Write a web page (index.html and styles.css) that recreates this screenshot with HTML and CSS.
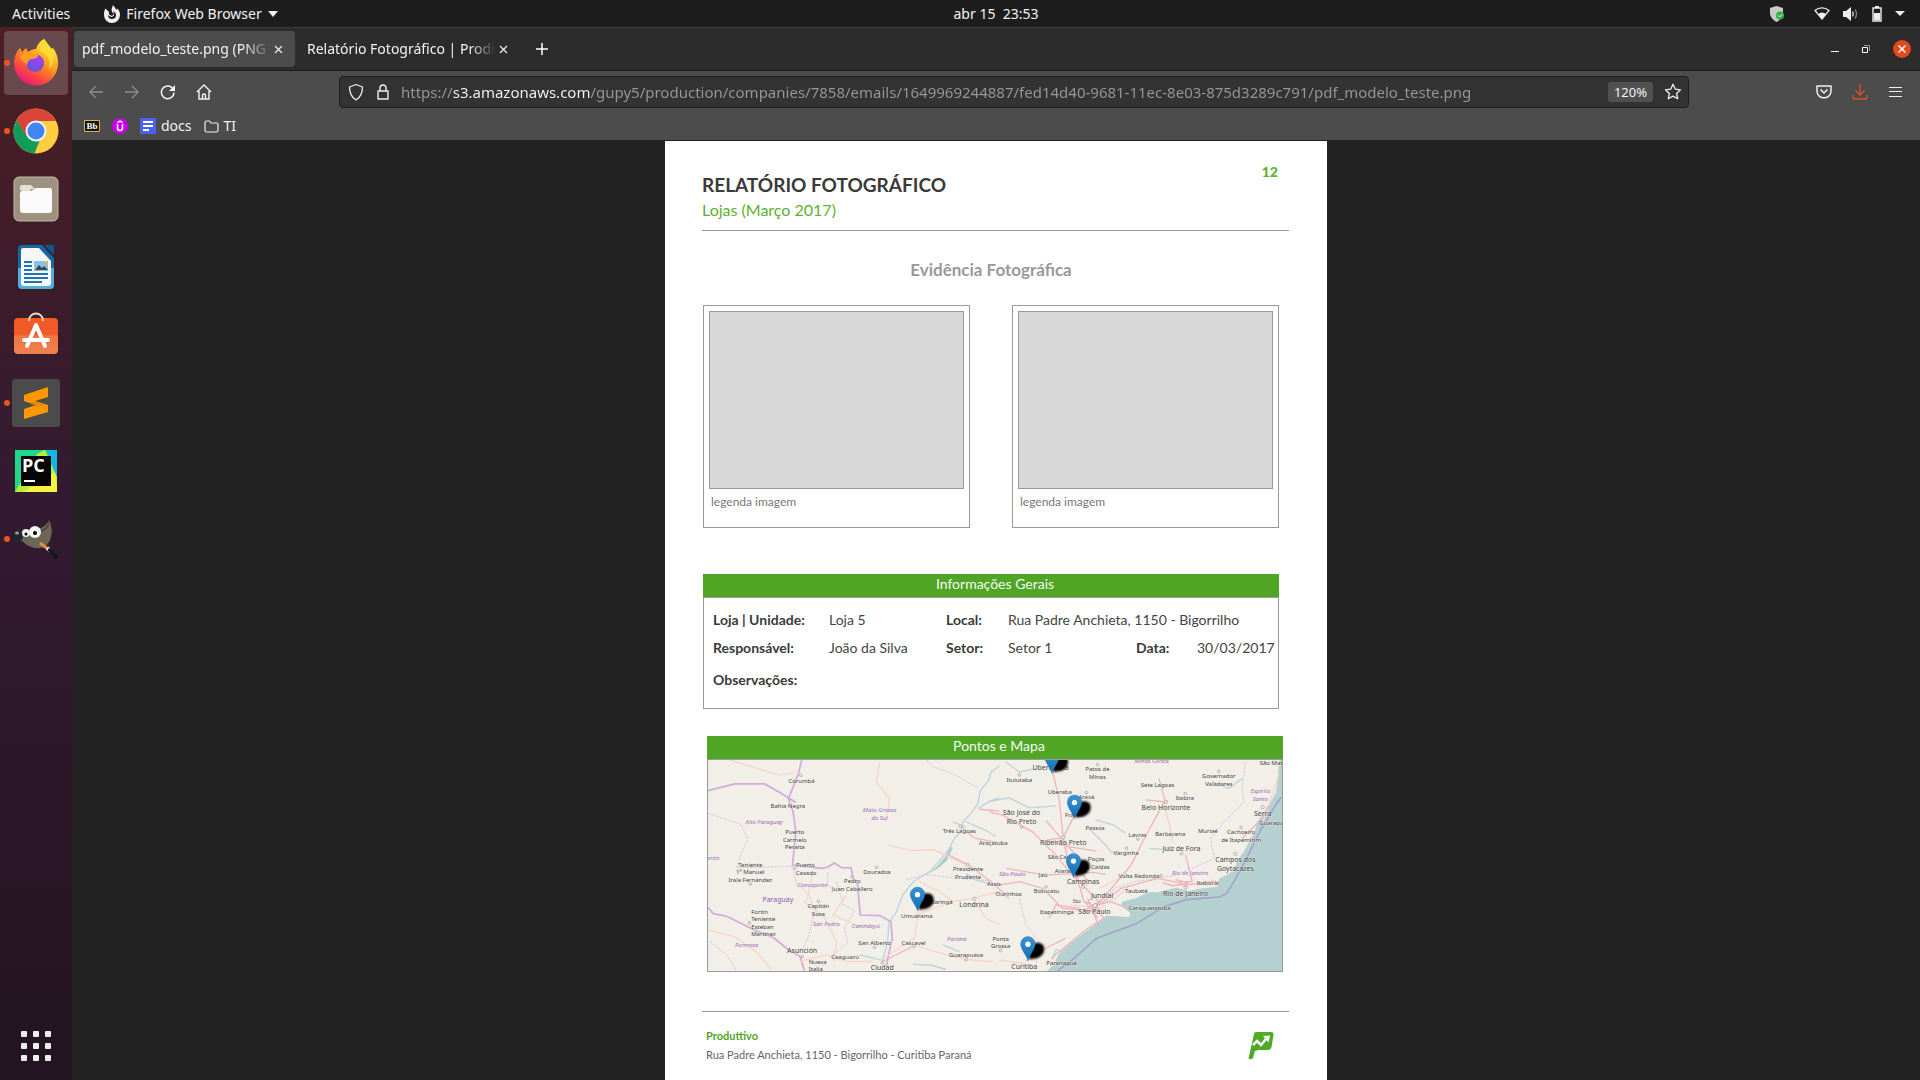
FILE: index.html
```html
<!DOCTYPE html>
<html lang="pt-BR">
<head>
<meta charset="utf-8">
<meta name="viewport" content="width=device-width, initial-scale=1">
<title>pdf_modelo_teste.png</title>
<link rel="stylesheet" href="styles.css">
</head>
<body>
<header class="topbar">
  <div class="topbar-left">
    <button class="plain">Activities</button>
    <button class="plain app-menu">
      <svg width="16" height="18" viewBox="0 0 16 18"><path fill="#f2f2f2" d="M9 0 7.500 4.500 8 7l2 2-2 2-3-1.500L5 7 1.500 3.500C0 6 0 8 0 10a8 8 0 0 0 16 0c0-3-1-5-3-6.500l-1 2C12 3 10 2 9 0z"/><path fill="#1d1d1d" d="M9 6c2 .8 3 2.500 3 4.500S10.500 14 8 14s-4-1.500-4-4l2 1.500 2 .5 2-1.500V8z"/></svg>
      Firefox Web Browser
      <svg width="10" height="6" viewBox="0 0 10 6"><path fill="#f2f2f2" d="M0 0h10L5 6z"/></svg>
    </button>
  </div>
  <time class="clock">abr 15&nbsp; 23:53</time>
  <div class="status">
    <svg class="status-shield" width="15" height="16" viewBox="0 0 15 16"><path fill="#c9c9c9" d="M6.500 0 13 2v5c0 4-3 7-6.500 9C3 14 0 11 0 7V2z"/><circle cx="10" cy="9.500" r="4" fill="#2eb34a"/><path d="m8 9.500 1.500 1.500L12 8.500" fill="none" stroke="#fff"/></svg>
    <svg width="16" height="13" viewBox="0 0 16 13"><path fill="none" stroke="#eee" stroke-width="1.200" d="M1 3.500C5 0 11 0 15 3.500L8 12z"/><path fill="#eee" d="M4 7c2.500-2 5.500-2 8 0l-4 5.500z"/></svg>
    <svg width="16" height="14" viewBox="0 0 16 14"><path fill="#eee" d="M0 4h3l5-4v14l-5-4H0z"/><path fill="none" stroke="#eee" stroke-width="1.300" d="M9.500 4.500q1.500 2.500 0 5"/><path fill="none" stroke="#888" stroke-width="1.300" d="M12 2.500q3 4.500 0 9"/></svg>
    <svg width="10" height="16" viewBox="0 0 10 16"><path fill="none" stroke="#eee" stroke-width="1.400" d="M1 2h8v13H1z"/><path fill="#eee" d="M3 0h4v2H3zM2 7h6v7H2z"/></svg>
    <svg width="10" height="5" viewBox="0 0 10 5"><path fill="#eee" d="M0 0h10L5 5z"/></svg>
  </div>
</header>
<div class="desktop">
  <nav class="dock" aria-label="Dock">
    <button class="dock-item is-running is-active" aria-label="Firefox">
      <svg width="46" height="48" viewBox="0 1 46 48">
        <defs>
          <linearGradient id="fx" x1="0.800" y1="0.100" x2="0.250" y2="1"><stop offset="0" stop-color="#ffe93a"/><stop offset=".4" stop-color="#ff9a20"/><stop offset=".7" stop-color="#ff4a3d"/><stop offset="1" stop-color="#e3128b"/></linearGradient>
          <radialGradient id="globe" cx=".6" cy=".2" r=".9"><stop offset="0" stop-color="#a63ff5"/><stop offset="1" stop-color="#5a58d6"/></radialGradient>
        </defs>
        <path fill="url(#fx)" d="M31 1c3 4 5 7 6 10l3-1c4 5 5 10 5 15a22 22 0 0 1-44 1C1 20 3 14 7 10l2 4 4-4 2 4c3-2 5-3 8-3 1-4 4-8 8-10z"/>
        <path fill="#ffdd35" d="M31 1c-4 3-6 8-4 12 7 3 12 8 9 18 6-5 5-14 2-21-2-3-5-6-7-9z"/>
        <circle cx="22" cy="25" r="9" fill="url(#globe)"/>
        <path fill="#ff9c24" d="M7 19c3-5 8-6 12-5l6 3c1 2-3 4-7 4-2 1-4 3-4 6-3-3-6-5-7-8z"/>
      </svg>
    </button>
    <button class="dock-item is-running" aria-label="Google Chrome">
      <svg width="46" height="46" viewBox="0 0 46 46"><circle cx="23" cy="23" r="22.500" fill="#ffcd40"/><path fill="#db4437" d="M23 .5A22.500 22.500 0 0 1 43 13H23L13 29 3.500 12A22.500 22.500 0 0 1 23 .5z"/><path fill="#0f9d58" d="M3.500 12 13.500 28l13 5-5 12.400A22.500 22.500 0 0 1 3.500 12z"/><circle cx="23" cy="23" r="10.500" fill="#f1f1f1"/><circle cx="23" cy="23" r="8.500" fill="#4285f4"/></svg>
    </button>
    <button class="dock-item" aria-label="Files">
      <svg width="46" height="46" viewBox="0 0 46 46"><rect x="1" y="1" width="44" height="44" rx="5" fill="#9c927f" stroke="#c2baaa"/><path fill="#e4dfd2" d="M7 14V11q0-2 2-2h9l4 4h-4l-2 4z"/><path fill="#fafafa" d="M7 17q0-2 2-2h9l5-3h14q2 0 2 2v20q0 3-3 3H10q-3 0-3-3z"/></svg>
    </button>
    <button class="dock-item" aria-label="LibreOffice Writer">
      <svg width="38" height="46" viewBox="0 0 38 46"><path fill="#1668a5" d="M5 1h20l12 13v27q0 4-4 4H5q-4 0-4-4V5q0-4 4-4z"/><path fill="#52aedb" d="M1 24h36v17q0 4-4 4H5q-4 0-4-4z"/><path fill="#f7f7f7" d="M6 4h16l12 13v22q0 3-3 3H7q-3 0-3-3V7q0-3 2-3z"/><path fill="#0e588f" d="M27 1h9q1 0 1 1v9z"/><path stroke="#1877b8" stroke-width="2" d="M7 18h8M7 22h8M7 26h8M7 30h24M7 34h24M7 38h18"/><path fill="#83c3ee" d="M17 17h14v10H17z"/><path fill="#444" d="m18 26 4-5 3 3 2-2 4 4z"/><path fill="#fbb03b" d="M27 17h4v4z"/></svg>
    </button>
    <button class="dock-item" aria-label="Software">
      <svg width="46" height="46" viewBox="0 2 46 46"><defs><linearGradient id="bag" x2="0" y2="1"><stop offset=".45" stop-color="#f05a26"/><stop offset=".5" stop-color="#f17444"/><stop offset="1" stop-color="#f08050"/></linearGradient></defs><rect x="1" y="8" width="44" height="36" rx="4" fill="url(#bag)"/><path d="M16 11c0-10 14-10 14 0" fill="none" stroke="#f0d9bb" stroke-width="2"/><path d="m14 36 9-21 9 21M11 30h24" fill="none" stroke="#fff" stroke-width="4" stroke-linecap="round" stroke-linejoin="round"/></svg>
    </button>
    <button class="dock-item is-running" aria-label="Sublime Text">
      <svg width="48" height="48" viewBox="0 0 48 48"><rect width="48" height="48" rx="3" fill="#4b4b4b"/><path fill="#ff9800" d="m12 16 24-8v10l-13 4 13 4v7l-24 7V30l12-4-12-4z"/><path fill="#d97b10" d="m23 28 13-2-12-4-7 2z" opacity=".5"/></svg>
    </button>
    <button class="dock-item" aria-label="PyCharm">
      <svg width="42" height="42" viewBox="0 0 42 42"><path fill="#21d789" d="M0 0h42v42H0z"/><path fill="#12b7e8" d="M32 0h10v30z"/><path fill="#b7ee3c" d="m22 4 8-4 12 27v15H0z"/><path fill="#f7f23c" d="m8 42 32-20 2 14v6z"/><path fill="#050505" d="M6 6h30v30H6z"/><path fill="#fff" d="M9 30h11v2H9z"/><text class="pycharm-letters" x="7" y="22">PC</text></svg>
    </button>
    <button class="dock-item is-running" aria-label="GIMP">
      <svg width="46" height="40" viewBox="0 0 46 40"><path fill="#6b6656" d="M36 1c4 8 4 18-2 25-8 6-18 3-25-4l-6-2 2-7c7-1 10 0 13-2 8-1 14-2 18-10z"/><path fill="#4b473c" d="M36 1c-1 8-8 11-14 12 6 1 11-1 14-6z"/><ellipse cx="5" cy="17" rx="5" ry="6" fill="#23272c"/><ellipse cx="4" cy="14" rx="2" ry="1.500" fill="#9aa3ab"/><circle cx="13" cy="14" r="4" fill="#eee"/><circle cx="22" cy="13" r="6" fill="#f5f5f5"/><circle cx="13" cy="15" r="1.500"/><circle cx="22" cy="14" r="2"/><path d="m27 24 8 6" stroke="#e0903e" stroke-width="3"/><path d="m34 29 4 3" stroke="#ddd" stroke-width="4"/><path d="m37 31 6 7" stroke="#16181c" stroke-width="4" stroke-linecap="round"/></svg>
    </button>
    <button class="dock-item dock-apps" aria-label="Show applications">
      <svg width="30" height="30" viewBox="0 0 30 30" fill="#f0f0ee"><rect width="6" height="6" rx="1"/><rect x="12" width="6" height="6" rx="1"/><rect x="24" width="6" height="6" rx="1"/><rect y="12" width="6" height="6" rx="1"/><rect x="12" y="12" width="6" height="6" rx="1"/><rect x="24" y="12" width="6" height="6" rx="1"/><rect y="24" width="6" height="6" rx="1"/><rect x="12" y="24" width="6" height="6" rx="1"/><rect x="24" y="24" width="6" height="6" rx="1"/></svg>
    </button>
  </nav>
  <div class="browser">
    <div class="tabs">
      <div class="tab is-selected"><span class="tab-title">pdf_modelo_teste.png (PNG Image)</span><button class="plain tab-close" aria-label="Fechar aba"><svg width="9" height="9" viewBox="0 0 9 9"><path d="m1 1 7 7M8 1 1 8" stroke="#eee" stroke-width="1.200"/></svg></button></div>
      <div class="tab"><span class="tab-title">Relatório Fotográfico | Produttivo</span><button class="plain tab-close" aria-label="Fechar aba"><svg width="9" height="9" viewBox="0 0 9 9"><path d="m1 1 7 7M8 1 1 8" stroke="#eee" stroke-width="1.200"/></svg></button></div>
      <button class="plain new-tab" aria-label="Nova aba"><svg width="12" height="12" viewBox="0 0 12 12"><path d="M6 0v12M0 6h12" stroke="#fff" stroke-width="1.500"/></svg></button>
      <div class="window-controls">
        <button class="plain" aria-label="Minimizar"><svg width="8" height="10" viewBox="0 0 8 10"><path fill="#fff" d="M0 7h8v1H0z"/></svg></button>
        <button class="plain" aria-label="Restaurar"><svg width="8" height="8" viewBox="0 0 8 8"><path fill="none" stroke="#fff" d="M.5 2.500h5v5h-5z"/><path fill="none" stroke="#999" d="M2 .5h5.500V6"/></svg></button>
        <button class="window-close" aria-label="Fechar"><svg width="8" height="8" viewBox="0 0 8 8"><path d="m.5.5 7 7M7.500.5l-7 7" stroke="#fff" stroke-width="1.500"/></svg></button>
      </div>
    </div>
    <div class="toolbar">
      <button class="plain tool" aria-label="Voltar"><svg width="16" height="16" viewBox="0 0 16 16"><path d="M15 8H2m6-6L2 8l6 6" fill="none" stroke="#8d8d8d" stroke-width="1.300"/></svg></button>
      <button class="plain tool" aria-label="Avançar"><svg width="16" height="16" viewBox="0 0 16 16"><path d="M1 8h13M8 2l6 6-6 6" fill="none" stroke="#8d8d8d" stroke-width="1.300"/></svg></button>
      <button class="plain tool" aria-label="Recarregar"><svg width="16" height="16" viewBox="0 0 16 16"><path d="M14 8.500A6.300 6.300 0 1 1 11.500 3.300L13 5" fill="none" stroke="#f5f5f5" stroke-width="1.500"/><path d="M15 1v6H9z" fill="#f5f5f5"/></svg></button>
      <button class="plain tool" aria-label="Início"><svg width="16" height="16" viewBox="0 0 16 16"><path d="m1 8 7-7 7 7M3 7v8h10V7M6.500 15v-4q0-1 1.500-1t1.500 1v4" fill="none" stroke="#f5f5f5" stroke-width="1.400"/></svg></button>
      <div class="urlbar">
        <svg width="16" height="18" viewBox="0 0 16 18"><path d="M8 1.500 14.500 4c0 6-1.500 10-6.500 13C3 14 1.500 10 1.500 4z" fill="none" stroke="#f0f0f0" stroke-width="1.300" stroke-linejoin="round"/></svg>
        <svg width="12" height="16" viewBox="0 0 12 16"><path d="M1 7h10v8H1zM3 7V4q0-3 3-3t3 3v3" fill="none" stroke="#f0f0f0" stroke-width="1.400" stroke-linejoin="round"/></svg>
        <input class="url" type="text" aria-label="Endereço" value="https://s3.amazonaws.com/gupy5/production/companies/7858/emails/1649969244887/fed14d40-9681-11ec-8e03-875d3289c791/pdf_modelo_teste.png">
        <button class="zoom-level">120%</button>
        <button class="plain" aria-label="Favoritar"><svg width="18" height="17" viewBox="0 0 18 17"><path d="m9 1.200 2.300 5 5.200.6-3.900 3.600 1.100 5.300L9 13.100l-4.700 2.600 1.100-5.300L1.500 6.800l5.200-.6z" fill="none" stroke="#f0f0f0" stroke-width="1.300" stroke-linejoin="round"/></svg></button>
      </div>
      <button class="plain tool" aria-label="Pocket"><svg width="16" height="14" viewBox="0 0 16 14"><path d="M1 1h14v5c0 9-14 9-14 0zM4.500 4.500 8 8l3.500-3.500" fill="none" stroke="#f0f0f0" stroke-width="1.500" stroke-linejoin="round"/></svg></button>
      <button class="plain tool" aria-label="Downloads"><svg width="16" height="16" viewBox="0 0 16 16"><path d="M8 0v11M3.500 6.500 8 11l4.500-4.500M1 11v2q0 2 2 2h10q2 0 2-2v-2" fill="none" stroke="#dd4f22" stroke-width="1.400"/></svg></button>
      <button class="plain tool" aria-label="Menu"><svg width="14" height="10" viewBox="0 0 14 10"><path fill="#f0f0f0" d="M0 0h13v1H0zM0 4h13v1H0zM0 9h13v1H0z"/></svg></button>
    </div>
    <nav class="bookmarks" aria-label="Favoritos">
      <a href="#" aria-label="Blackboard"><svg width="16" height="12" viewBox="0 0 16 12"><path d="M.5.5h15v11H.5z" fill="#111" stroke="#e0b53a"/><text class="bb-letters" x="8" y="9">Bb</text></svg></a>
      <a href="#" aria-label="Unicesumar"><svg width="16" height="16" viewBox="0 0 16 16"><circle cx="8" cy="8" r="8" fill="#c800ec"/><path d="M5.500 6v4q0 2.500 2.500 2.500t2.500-2.500V6M5.500 4.500 8 3l2.500 1.500" fill="none" stroke="#fff" stroke-width="1.500"/></svg></a>
      <a href="#"><svg width="16" height="16" viewBox="0 0 16 16"><rect width="16" height="16" rx="1" fill="#4e61f6"/><path fill="#fff" d="M3 3h10v2H3zM3 7h10v2H3zM3 11h6v2H3z"/></svg>docs</a>
      <a href="#"><svg width="15" height="13" viewBox="0 0 15 13"><path d="M1 2.500Q1 1 2.500 1h3L7 3h5.500Q14 3 14 4.500v6q0 1.500-1.500 1.500h-10Q1 12 1 10.500z" fill="none" stroke="#f0f0f0" stroke-width="1.200"/></svg>TI</a>
    </nav>
    <main class="viewer">
      <article class="report">
        <header class="report-header">
          <div class="report-heading">
            <h1>RELATÓRIO FOTOGRÁFICO</h1>
            <p class="subtitle">Lojas (Março 2017)</p>
          </div>
          <span class="page-number">12</span>
        </header>
        <section class="evidence">
          <h2>Evidência Fotográfica</h2>
          <div class="photos">
            <figure class="photo"><div class="photo-image"></div><figcaption>legenda imagem</figcaption></figure>
            <figure class="photo"><div class="photo-image"></div><figcaption>legenda imagem</figcaption></figure>
          </div>
        </section>
        <section class="info">
          <h3 class="band">Informações Gerais</h3>
          <dl class="info-grid">
            <dt>Loja | Unidade:</dt><dd>Loja 5</dd><dt>Local:</dt><dd class="wide">Rua Padre Anchieta, 1150 - Bigorrilho</dd>
            <dt>Responsável:</dt><dd>João da Silva</dd><dt>Setor:</dt><dd>Setor 1</dd><dt>Data:</dt><dd>30/03/2017</dd>
            <dt class="notes">Observações:</dt><dd></dd>
          </dl>
        </section>
        <section class="map">
          <h3 class="band">Pontos e Mapa</h3>
          <svg class="map-canvas" viewBox="24 14 1726 634" role="img" aria-label="Mapa">
            <defs>
              <filter id="soft" x="-30%" y="-30%" width="160%" height="160%"><feGaussianBlur stdDeviation="3"/></filter>
              <linearGradient id="pinFill" x2="0" y2="1"><stop offset="0" stop-color="#3b93d0"/><stop offset="1" stop-color="#0f6fb8"/></linearGradient>
              <g id="pin"><path filter="url(#soft)" d="M4-4C2-20 8-38 16-50q18-8 30 4c8 18-2 36-24 40z"/><path fill="url(#pinFill)" stroke="#1d6ba5" d="M0 0C-4-16-22-34-22-50a22 22 0 0 1 44 0C22-34 4-16 0 0z"/><circle cy="-49" r="8" fill="#fff"/></g>
            </defs>
            <path class="land" d="M24 14h1726v634H24z"/>
            <g transform="translate(870 0)">
              <path class="sea" d="M880 14L873 14 868 60 862 112 832 165 805 200 798 228 768 285 745 318 735 348 692 370 684 396 640 400 600 408 562 398 545 402 505 412 478 412 440 430 400 440 395 452 424 474 420 486 350 482 340 492 290 530 240 568 208 598 196 626 172 650 880 650z"/>
              <path class="sea-edge" d="M205 648l48-36 70-62 120-44 80-50 70-22 100-8 20-10 25-40 42-80 35-70 48-80 15-20"/>
            </g>
            <g class="water">
              <path d="M680 357l30-20 25-30 20-32 5 4-18 38-28 24z"/>
            </g>
            <g class="river">
              <path d="M900 32l-25 18-8 26-24 30-8 40-20 28-25 28-4 26-22 24-20 36-50 60-50 30-34 40-20 54-22 30-4 60-16 60M835 160l40-24 25-8M800 200l60 26 30 18M800 355l30 20 40 10M760 200l40 16M480 600l40 10 34 8M640 628l60 4 40 12"/>
              <path d="M870 138l60-10 60 30 80-6M1170 220l40 40 30 34 20-6M1190 194l50 14 40 26M920 20l40 30 50-10M1540 80l50 20 40-30M1060 614l10-30 20 6M1350 280l50 4M730 570l50 20"/>
            </g>
            <g class="border">
              <path d="M306 14l-10 40-30 76 14 40 8 60-6 60-4 40M24 106l80-20h90l50 28 44 28M278 330l90 10 16-4 20-12 22 14h28l6 30 14 20 4 48 4 44 58 2 34 18 4 50-18 84M24 458l16 18 40 8 80 40 60 24 40 32 40 24 14 44"/>
            </g>
            <g class="border-thin">
              <path d="M24 174l100 34 20 46-20 40-14 44 170-4M280 348l12 40 34 30 20 46-20 80-16 40M410 378l20 70 34 20-30 50 10 46-50 40M384 350v40l24 20M680 14l20 20 60 20 50 30 26 14M620 374l60-16 80 10 120 10M30 560l50 40 30 48M1640 20l-10 80 6 40-60 60-40 50 10 60-110 50-130 20-60 20-40 60-90-10M960 430l20 80 40 50-10 70"/>
            </g>
            <g class="road-soft">
              <path d="M540 20l-10 60 40 50-10 70M90 14l150 46 50-10M565 270l70 16 70-2 60 30 50 20M660 380l60 30 40 30 60-10 80-20M24 525l80 20 70 50 40 50M310 440l60 40 40 80-6 60M300 620l80-20 60 20h80M440 420l-40 60 90 40M656 468l-10 80-90 60M650 480l110-40M820 430l40 60 40 20M640 570l80 24 80 20 80 6M1290 390l-40 40-50 20M1394 140l20 80 6 40M1200 400l60-30M900 616l80 10M1740 60l-50 150M340 350l-20 90"/>
            </g>
            <g class="road">
              <path d="M1060 50l20 80 6 60 6 58 12 60 30 60 20 70 26 28 20 50M784 214l40 34 60 12M748 300l60 30 80 60 40 40M840 162l60 6M870 170l40 10 90 50 70 70 40 50 60 60 30 30M920 340l120 20 140-8 40 6M1040 196l40 46 60 70 24 80M1092 248l30-60M1092 248l-50 6 60 20 90 14M900 390l60-10 70 20 60 60 90 8M1186 460l60-70 50-60 40-80 60-110M1340 134l60 6-20-70M1186 460l80-60 110-30 70 14 20 14M1140 460l-70-10-20 40M1186 460l30 30-50 30-110 90M1186 450l50-10 50 20M1440 380l40 0-20-80M1450 392l100-14 12 14M550 620l90-46M980 620l60-40 60-30M1630 250l50-50 30-50M1390 382l30 10 50-8-40-10M1160 440l50 30M1150 470l60-36M1165 430l30 60"/>
            </g>
            <g class="city">
              <circle cx="303" cy="60" r="4"/><circle cx="284" cy="341" r="4"/><circle cx="151" cy="387" r="4"/><circle cx="148" cy="504" r="4"/><circle cx="531" cy="337" r="4"/><circle cx="457" cy="365" r="4"/><circle cx="356" cy="439" r="4"/><circle cx="783" cy="214" r="4"/><circle cx="804" cy="328" r="4"/><circle cx="825" cy="431" r="5"/><circle cx="307" cy="606" r="4"/><circle cx="525" cy="577" r="4"/><circle cx="643" cy="575" r="4"/><circle cx="548" cy="625" r="4"/><circle cx="800" cy="614" r="4"/><circle cx="960" cy="59" r="4"/><circle cx="1195" cy="28" r="4"/><circle cx="1162" cy="112" r="4"/><circle cx="967" cy="216" r="4"/><circle cx="1092" cy="247" r="5"/><circle cx="1401" cy="140" r="5"/><circle cx="1459" cy="115" r="4"/><circle cx="1560" cy="48" r="4"/><circle cx="1692" cy="156" r="5"/><circle cx="1610" cy="296" r="5"/><circle cx="1627" cy="217" r="4"/><circle cx="1448" cy="296" r="4"/><circle cx="1152" cy="395" r="5"/><circle cx="1188" cy="452" r="6"/><circle cx="1460" cy="398" r="5"/><circle cx="1040" cy="396" r="4"/><circle cx="904" cy="587" r="4"/><circle cx="1282" cy="279" r="4"/><circle cx="1317" cy="252" r="4"/><circle cx="1386" cy="362" r="4"/>
            </g>
            <g class="place">
              <text x="305" y="82">Corumbá</text><text x="264" y="158">Bahía Negra</text>
              <text x="285" y="237">Puerto</text><text x="285" y="260">Carmelo</text><text x="285" y="282">Peralta</text>
              <text x="151" y="336">Teniente</text><text x="151" y="358">1º Manuel</text><text x="151" y="380">Irala Fernández</text>
              <text x="317" y="337">Puerto</text><text x="319" y="359">Casado</text>
              <text x="458" y="385">Pedro</text><text x="458" y="408">Juan Caballero</text>
              <text x="532" y="357">Dourados</text><text x="356" y="460">Capitán</text><text x="356" y="482">Sosa</text>
              <text x="179" y="476">Fortín</text><text x="190" y="498">Teniente</text><text x="188" y="521">Esteban</text><text x="191" y="543">Martinez</text>
              <text x="436" y="613">Caaguazú</text><text x="354" y="628">Nueva</text><text x="348" y="648">Italia</text>
              <text x="525" y="569">San Alberto</text><text x="642" y="569">Cascavel</text><text x="800" y="607">Guarapuava</text>
              <text x="652" y="489">Umuarama</text><text x="724" y="447">Maringá</text>
              <text x="780" y="234">Três Lagoas</text><text x="882" y="269">Araçatuba</text>
              <text x="806" y="348">Presidente</text><text x="806" y="371">Prudente</text><text x="884" y="394">Assis</text>
              <text x="928" y="422">Ourinhos</text><text x="904" y="557">Ponta</text><text x="904" y="579">Grossa</text>
              <text x="960" y="79">Ituiutaba</text><text x="1195" y="48">Patos de</text><text x="1195" y="70">Minas</text>
              <text x="1082" y="117">Uberaba</text><text x="1162" y="132">Araxá</text><text x="1188" y="226">Passos</text>
              <text x="1126" y="185">Franca</text><text x="1090" y="311">São Carlos</text><text x="1114" y="353">Araraquara</text>
              <text x="1191" y="319">Poços</text><text x="1191" y="342">de Caldas</text><text x="1032" y="365">Jaú</text>
              <text x="1042" y="413">Botucatu</text><text x="1133" y="445">Itu</text><text x="1073" y="476">Itapetininga</text>
              <text x="1312" y="413">Taubaté</text><text x="1352" y="465">Caraguatatuba</text><text x="1320" y="369">Volta Redonda</text>
              <text x="1281" y="300">Varginha</text><text x="1316" y="245">Lavras</text><text x="1414" y="243">Barbacena</text>
              <text x="1527" y="235">Muriaé</text><text x="1627" y="238">Cachoeiro</text><text x="1627" y="260">de Itapemirim</text>
              <text x="1376" y="94">Sete Lagoas</text><text x="1458" y="134">Itabira</text><text x="1560" y="69">Governador</text><text x="1560" y="92">Valadares</text>
              <text x="1732" y="29">São Mateus</text><text x="1724" y="210">Guarapari</text><text x="1527" y="389">Itaboraí</text><text x="1087" y="631">Paranaguá</text>
            </g>
            <g class="place is-major">
              <text x="307" y="595">Asunción</text><text x="548" y="646">Ciudad</text><text x="824" y="456">Londrina</text>
              <text x="1054" y="45">Uberlândia</text><text x="967" y="179">São José do</text><text x="967" y="206">Rio Preto</text>
              <text x="1092" y="271">Ribeirão Preto</text><text x="1152" y="387">Campinas</text><text x="1209" y="430">Jundiaí</text>
              <text x="1186" y="476">São Paulo</text><text x="1460" y="424">Rio de Janeiro</text><text x="1448" y="288">Juiz de Fora</text>
              <text x="1401" y="163">Belo Horizonte</text><text x="1692" y="181">Serra</text><text x="1610" y="321">Campos dos</text><text x="1610" y="348">Goytacazes</text>
              <text x="975" y="642">Curitiba</text>
            </g>
            <g class="region">
              <text x="540" y="171">Mato Grosso</text><text x="540" y="193">do Sul</text><text x="193" y="206">Alto Paraguay</text>
              <text x="40" y="315">erón</text><text x="338" y="397">Concepción</text><text x="380" y="512">San Pedro</text>
              <text x="498" y="518">Canindeyú</text><text x="140" y="577">Formosa</text><text x="772" y="557">Paraná</text>
              <text x="939" y="362">São Paulo</text><text x="1474" y="359">Rio de Janeiro</text><text x="1358" y="24">Minas Gerais</text>
              <text x="1685" y="114">Espírito</text><text x="1685" y="136">Santo</text>
            </g>
            <text class="country" x="234" y="442">Paraguay</text>
            <use href="#pin" x="654" y="468"/><use href="#pin" x="1058" y="54"/><use href="#pin" x="1126" y="191"/><use href="#pin" x="1123" y="367"/><use href="#pin" x="986" y="617"/>
          </svg>
        </section>
        <footer class="report-footer">
          <address>
            <strong>Produttivo</strong>
            <span>Rua Padre Anchieta, 1150 - Bigorrilho - Curitiba Paraná</span>
          </address>
          <svg width="26" height="28" viewBox="0 0 26 28"><path fill="#4dab26" d="M8 1h15q3 0 2.500 3l-2 12q-.5 3-4 3h-9L7 20l-2 7q-.3 1-1.500 1H1.500q-1 0-.8-1.500L6 3q.5-2 2-2z"/><path d="m5 14 4-4 4 4 5-6" fill="none" stroke="#fff" stroke-width="2.500"/><path fill="#fff" d="m15 5 7-.5-1.500 7z"/></svg>
        </footer>
      </article>
    </main>
  </div>
</div>
</body>
</html>
```
FILE: styles.css
```css
* { box-sizing: border-box; }

body {
  margin: 0;
  height: 100vh;
  display: flex;
  flex-direction: column;
  overflow: hidden;
  background: #222;
  color: #f2f2f2;
  font: 14px/20px "Noto Sans", "Open Sans", sans-serif;
}

h1, h2, h3, p, dl, dd, figure { margin: 0; }
svg { display: block; flex: none; }
button { font: inherit; color: inherit; cursor: pointer; }
.plain { display: flex; align-items: center; padding: 0; border: 0; background: none; }

/* Desktop top bar */
.topbar {
  display: grid;
  grid-template-columns: 1fr auto 1fr;
  align-items: center;
  height: 27px;
  padding-left: 72px;
  background: #1d1d1d;
}
.topbar-left { display: flex; gap: 34px; margin-left: -60px; }
.app-menu { gap: 6px; }
.status { display: flex; justify-content: flex-end; align-items: center; gap: 13px; padding-right: 15px; }
.status-shield { margin-right: 16px; }

.desktop { display: flex; flex: 1; min-height: 0; }

/* Dock */
.dock {
  display: flex;
  flex-direction: column;
  gap: 4px;
  flex: none;
  width: 72px;
  padding: 4px 4px 2px;
  background: linear-gradient(#4c2025, #3c1c2a 25%, #331a31 45%, #2d1629 70%, #221520);
}
.dock-item {
  position: relative;
  display: flex;
  align-items: center;
  justify-content: center;
  width: 64px;
  height: 64px;
  padding: 0;
  border: 0;
  border-radius: 4px;
  background: none;
}
.dock-item.is-active { background: #684a4d; }
.dock-item.is-running::before {
  content: "";
  position: absolute;
  left: 0;
  top: 29px;
  width: 6px;
  height: 6px;
  border-radius: 50%;
  background: #e95420;
}
.dock-apps { margin-top: auto; }
.pycharm-letters { font: 700 18px "Open Sans", sans-serif; fill: #fff; }

/* Browser chrome */
.browser { display: flex; flex-direction: column; flex: 1; min-width: 0; border-top: 1px solid #3c3c3c; }
.tabs {
  display: flex;
  align-items: center;
  height: 43px;
  padding: 0 9px 0 2px;
  border-bottom: 1px solid #1c1c1c;
  background: #2c2c2c;
}
.tab { display: flex; align-items: center; width: 221px; height: 36px; margin-right: 4px; padding: 0 12px 0 8px; border-radius: 4px; }
.tab.is-selected { background: #4c4c4c; }
.tab-title {
  flex: 1;
  overflow: hidden;
  white-space: nowrap;
  mask-image: linear-gradient(90deg, #000 86%, transparent);
}
.tab-close { margin-left: 3px; }
.new-tab { margin-left: 12px; }
.window-controls { display: flex; align-items: center; gap: 23px; margin-left: auto; }
.window-close { display: flex; align-items: center; justify-content: center; width: 18px; height: 18px; padding: 0; border: 0; border-radius: 50%; background: #e2491b; }

.toolbar { display: flex; align-items: center; height: 41px; padding: 0 6px; background: #4c4c4c; }
.tool { justify-content: center; width: 36px; height: 32px; }
.urlbar {
  display: flex;
  align-items: center;
  flex: 1;
  height: 32px;
  margin: 0 117px;
  padding: 0 6px 0 8px;
  border: 1px solid #1e1e1e;
  border-radius: 4px;
  background: #333;
}
.urlbar svg + svg { margin-left: 13px; }
.url {
  flex: 1;
  min-width: 0;
  height: 24px;
  margin-left: 12px;
  padding: 0;
  border: 0;
  outline: 0;
  font: inherit;
  font-size: 15px;
  color: transparent;
  background: linear-gradient(90deg, #989898 52px, #f8f8f8 52px 189px, #989898 189px);
  background-clip: text;
  -webkit-background-clip: text;
}
.zoom-level { height: 20px; margin-right: 11px; padding: 0 6px; border: 0; border-radius: 3px; background: #515151; font-size: 13px; }

.bookmarks { display: flex; align-items: center; gap: 12px; height: 28px; padding: 0 12px; background: #4c4c4c; }
.bookmarks a { display: flex; align-items: center; gap: 5px; color: #f2f2f2; text-decoration: none; }
.bb-letters { font: 700 9px "Liberation Serif", serif; fill: #fff; text-anchor: middle; }

/* Report shown in the viewer */
.viewer { flex: 1; min-height: 0; display: flex; justify-content: center; overflow: hidden; padding-top: 1px; background: #222; }
.report { width: 662px; background: #fff; color: #444; font: 14px/20px Lato, sans-serif; }

.report-header {
  display: flex;
  justify-content: space-between;
  margin: 0 38px 0 37px;
  padding: 21px 11px 10px 0;
  border-bottom: 1px solid #999;
}
.report-heading { padding-top: 11px; }
h1 { font-size: 19px; line-height: 24px; font-weight: 700; color: #3a3a3a; }
.subtitle { margin-top: 3px; font-size: 16px; color: #5cb130; }
.page-number { font-weight: 900; color: #5cb130; }

.evidence { margin: 29px 48px 0 38px; }
h2 { font-size: 17px; line-height: 20px; font-weight: 700; text-align: center; color: #999; }
.photos { display: grid; grid-template-columns: 1fr 1fr; gap: 42px; margin-top: 25px; }
.photo { padding: 5px 5px 18px; border: 1px solid #999; }
.photo-image { aspect-ratio: 255 / 178; border: 1px solid #999; background: #d8d8d8; }
figcaption { padding: 6px 2px 0; font-size: 12px; line-height: 14px; color: #777; }

.band { height: 23px; background: #50a525; color: #f4faf0; font-size: 14px; line-height: 20px; font-weight: 400; text-align: center; padding-left: 8px; }
.info { margin: 46px 48px 0 38px; }
.info-grid {
  display: grid;
  grid-template-columns: 116px 117px 62px 128px 61px 1fr;
  row-gap: 8px;
  padding: 12px 0 18px 9px;
  border: 1px solid #999;
  white-space: nowrap;
}
dt { font-weight: 700; color: #3a3a3a; }
.wide { grid-column: span 3; }
.notes { padding-top: 4px; }

.map { margin: 27px 44px 0 42px; }
.map-canvas { width: 100%; height: auto; border: 1px solid #999; }
.land { fill: #f2efe9; }
.sea { fill: #b5d0d0; }
.sea-edge { fill: none; stroke: #a3a3ca; stroke-width: 5; }
.water { fill: #a9cccc; }
.river { fill: none; stroke: #bcd3dc; stroke-width: 4; }
.border { fill: none; stroke: #d3a9d8; stroke-width: 5; }
.border-thin { fill: none; stroke: #dcc4e2; stroke-width: 3; stroke-dasharray: 9 3; }
.road { fill: none; stroke: #f0b3bb; stroke-width: 4; }
.road-soft { fill: none; stroke: #f8d5c6; stroke-width: 4; }
.city { fill: #f2efe9; stroke: #999; stroke-width: 2; }
.place, .region { font: 18px "Noto Sans", sans-serif; text-anchor: middle; fill: #444; stroke: #f2efe9; stroke-opacity: 0.6; stroke-width: 3; paint-order: stroke; }
.place.is-major { font-size: 21px; }
.region { font-style: italic; fill: #a06cb4; }
.country { font: 21px "Noto Sans", sans-serif; text-anchor: middle; fill: #8d58a6; }

.report-footer { display: flex; justify-content: space-between; margin: 39px 38px 0 37px; padding: 16px 15px 0 4px; border-top: 1px solid #999; }
.report-footer svg { margin-top: 3px; }
address { display: flex; flex-direction: column; gap: 3px; font-size: 11px; line-height: 16px; font-style: normal; color: #666; }
address strong { color: #50a525; }
```
